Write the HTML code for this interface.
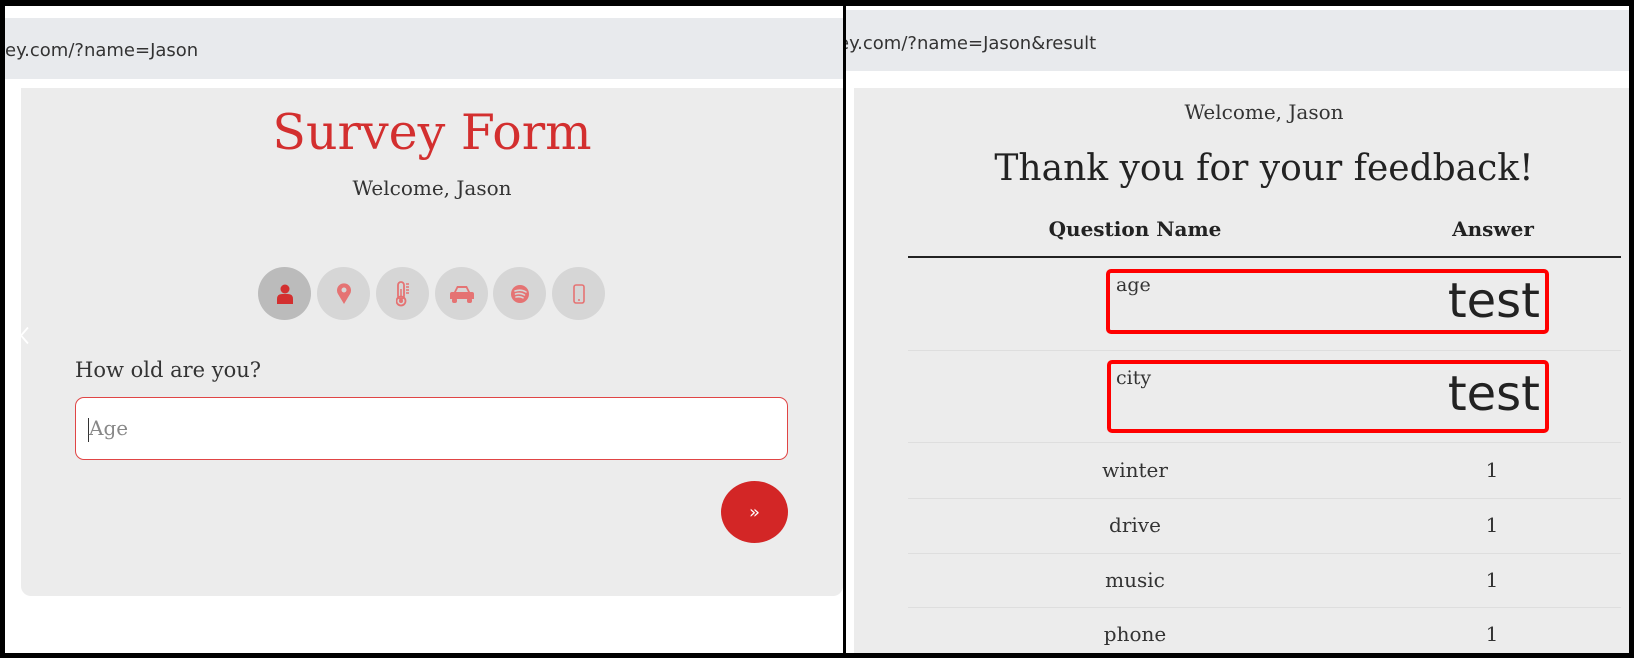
<!DOCTYPE html>
<html><head><meta charset="utf-8">
<style>
*{margin:0;padding:0;box-sizing:border-box}
body{width:1634px;height:658px;position:relative;background:#000;overflow:hidden;font-family:"DejaVu Serif",serif;color:#222}
.abs{position:absolute}
.url{font-family:"DejaVu Sans","Liberation Sans",sans-serif;font-size:18px;color:#333;white-space:nowrap}
.c{text-align:center;white-space:nowrap}
.circ{position:absolute;width:53px;height:53px;border-radius:50%;background:#d6d6d6;top:267px;display:flex;align-items:center;justify-content:center}
.row{position:absolute;left:908px;width:713px;border-bottom:1px solid #dedede}
.rb{position:absolute;border:4px solid #f00;border-radius:5px}
</style></head><body>
<!-- left panel -->
<div class="abs" style="left:5px;top:6px;width:838px;height:647px;background:#fff;overflow:hidden">
  <div class="abs" style="left:0;top:12px;width:838px;height:61px;background:#e8eaed"></div>
  <div class="abs url" style="left:0;top:34px">ey.com/?name=Jason</div>
  <div class="abs" style="left:16px;top:82px;width:822px;height:508px;background:#ececec;border-radius:0 0 10px 10px"></div>
</div>
<div class="abs c" style="left:0;width:864px;top:104px;font-size:49px;color:#d32f2f">Survey Form</div>
<div class="abs c" style="left:0;width:864px;top:176px;font-size:20px;color:#333">Welcome, Jason</div>
<div class="circ" style="left:258px;background:#bbb"><svg width="18" height="20" viewBox="0 0 18 20"><circle cx="9" cy="5" r="4.5" fill="#d32f2f"/><path d="M1 20v-5q0-5 5-5h6q5 0 5 5v5z" fill="#d32f2f"/></svg></div>
<div class="circ" style="left:317px"><svg width="16" height="22" viewBox="0 0 16 22"><path d="M8 21L2 11a7 7 0 1 1 12 0z" fill="#e57373"/><circle cx="8" cy="7" r="2.5" fill="#d6d6d6"/></svg></div>
<div class="circ" style="left:376px"><svg width="14" height="26" viewBox="0 0 14 26"><rect x="2" y="1" width="6" height="17" rx="3" fill="none" stroke="#e57373" stroke-width="1.8"/><circle cx="5" cy="20" r="4.5" fill="none" stroke="#e57373" stroke-width="1.8"/><circle cx="5" cy="20" r="2" fill="#e57373"/><path d="M5 8v10M10 3h3M10 6h3M10 9h3M10 12h3" stroke="#e57373" stroke-width="1.5"/></svg></div>
<div class="circ" style="left:435px"><svg width="26" height="20" viewBox="0 0 26 20"><path d="M5 8l3-6h10l3 6h2a2 2 0 0 1 2 2v5h-24v-5a2 2 0 0 1 2-2z" fill="#e57373"/><path d="M9 4h8l2 4h-12z" fill="#d6d6d6"/><rect x="3" y="14" width="5" height="5" rx="2" fill="#e57373"/><rect x="18" y="14" width="5" height="5" rx="2" fill="#e57373"/></svg></div>
<div class="circ" style="left:493px"><svg width="20" height="20" viewBox="0 0 20 20"><circle cx="10" cy="10" r="9" fill="#e57373"/><path d="M5 7q6-2 11 1M5.5 10q5-1.5 9 1M6 13q4-1 7 .8" stroke="#d6d6d6" stroke-width="1.6" fill="none" stroke-linecap="round"/></svg></div>
<div class="circ" style="left:552px"><svg width="12" height="20" viewBox="0 0 12 20"><rect x="1" y="1" width="10" height="18" rx="2" fill="none" stroke="#e57373" stroke-width="1.6"/><path d="M5 16h2" stroke="#e57373" stroke-width="1.5"/></svg></div>
<svg class="abs" style="left:19px;top:326px" width="12" height="19" viewBox="0 0 12 19"><path d="M9 1.5L2 9.5l7 8" stroke="#fff" stroke-width="1.8" fill="none"/></svg>
<div class="abs" style="left:75px;top:358px;font-size:21px;color:#333">How old are you?</div>
<div class="abs" style="left:75px;top:397px;width:713px;height:63px;background:#fff;border:1.5px solid #e04545;border-radius:9px"></div>
<div class="abs" style="left:88px;top:418px;width:1px;height:24px;background:#333"></div>
<div class="abs" style="left:89px;top:416px;font-size:20px;color:#888">Age</div>
<div class="abs" style="left:721px;top:481px;width:67px;height:62px;border-radius:50%;background:#d32626;color:#fff;display:flex;align-items:center;justify-content:center;font-family:'DejaVu Sans',sans-serif;font-size:18px">»</div>

<!-- right panel -->
<div class="abs" style="left:846px;top:6px;width:783px;height:652px;background:#fff;overflow:hidden">
  <div class="abs" style="left:0;top:4px;width:783px;height:61px;background:#e8eaed"></div>
  <div class="abs url" style="left:-8px;top:27px">ey.com/?name=Jason&amp;result</div>
  <div class="abs" style="left:8px;top:82px;width:775px;height:580px;background:#ececec"></div>
</div>
<div class="abs c" style="left:1064px;width:400px;top:100px;font-size:20px;color:#333">Welcome, Jason</div>
<div class="abs c" style="left:914px;width:700px;top:148px;font-size:36px;color:#222">Thank you for your feedback!</div>
<div class="abs c" style="left:1035px;width:200px;top:217px;font-size:20px;font-weight:bold">Question Name</div>
<div class="abs c" style="left:1393px;width:200px;top:217px;font-size:20px;font-weight:bold">Answer</div>
<div class="abs" style="left:908px;top:256px;width:713px;height:2px;background:#222"></div>
<div class="row" style="top:258px;height:93px"></div>
<div class="row" style="top:351px;height:92px"></div>
<div class="row" style="top:443px;height:56px"></div>
<div class="row" style="top:499px;height:55px"></div>
<div class="row" style="top:554px;height:54px"></div>
<div class="rb" style="left:1106px;top:269px;width:443px;height:65px"></div>
<div class="rb" style="left:1107px;top:360px;width:442px;height:73px"></div>
<div class="abs" style="left:1116px;top:274px;font-size:19px;color:#333">age</div>
<div class="abs" style="left:1116px;top:367px;font-size:19px;color:#333">city</div>
<div class="abs" style="left:1400px;width:140px;text-align:right;top:273px;font-family:'DejaVu Sans',sans-serif;font-size:48px;color:#222">test</div>
<div class="abs" style="left:1400px;width:140px;text-align:right;top:366px;font-family:'DejaVu Sans',sans-serif;font-size:48px;color:#222">test</div>
<div class="abs c" style="left:1035px;width:200px;top:458px;font-size:20px;color:#333">winter</div>
<div class="abs c" style="left:1035px;width:200px;top:513px;font-size:20px;color:#333">drive</div>
<div class="abs c" style="left:1035px;width:200px;top:568px;font-size:20px;color:#333">music</div>
<div class="abs c" style="left:1035px;width:200px;top:622px;font-size:20px;color:#333">phone</div>
<div class="abs c" style="left:1442px;width:100px;top:458px;font-size:20px;color:#333">1</div>
<div class="abs c" style="left:1442px;width:100px;top:513px;font-size:20px;color:#333">1</div>
<div class="abs c" style="left:1442px;width:100px;top:568px;font-size:20px;color:#333">1</div>
<div class="abs c" style="left:1442px;width:100px;top:622px;font-size:20px;color:#333">1</div>
<div class="abs" style="left:0;top:653px;width:1634px;height:5px;background:#000"></div>
</body></html>
